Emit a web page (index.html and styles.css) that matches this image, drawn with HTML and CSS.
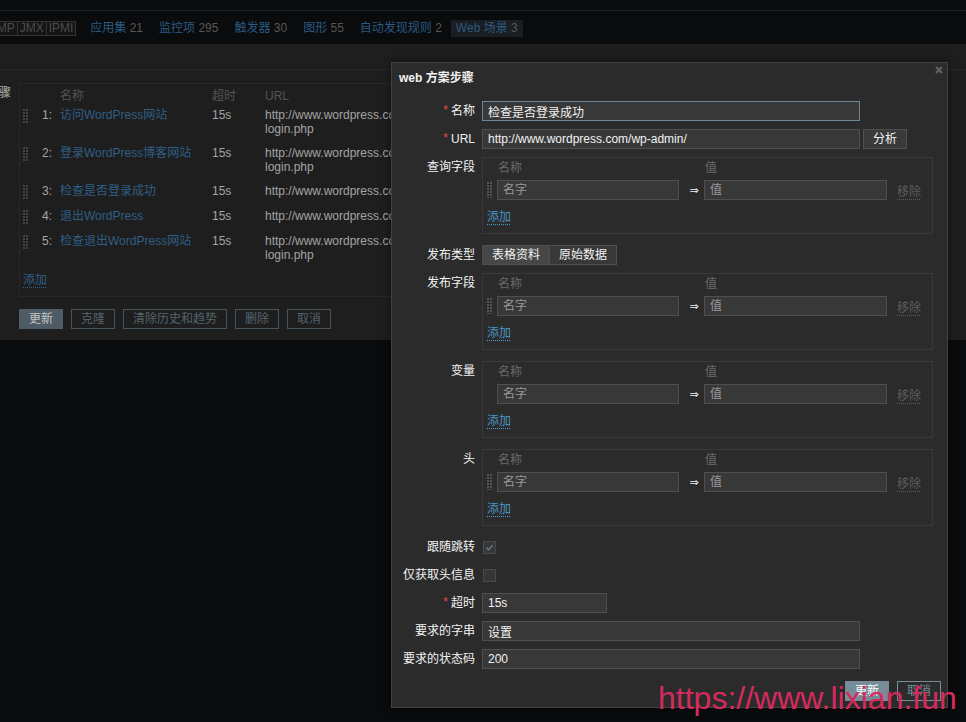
FILE: index.html
```html
<!DOCTYPE html>
<html lang="zh-CN">
<head>
    <meta charset="UTF-8">
    <meta name="viewport" content="width=device-width, initial-scale=1.0">
    <title>Web 场景</title>
    <link rel="stylesheet" href="styles.css">
</head>
<body>
    <div class="top-strip"></div>

    <nav class="host-nav">
        <span class="avail"><span class="avail-item snmp">SNMP</span><span class="avail-item">JMX</span><span class="avail-item">IPMI</span></span>
        <span class="nav-item"><a href="#">应用集</a> 21</span>
        <span class="nav-item"><a href="#">监控项</a> 295</span>
        <span class="nav-item"><a href="#">触发器</a> 30</span>
        <span class="nav-item"><a href="#">图形</a> 55</span>
        <span class="nav-item"><a href="#">自动发现规则</a> 2</span>
        <span class="nav-item active"><a href="#">Web 场景</a> 3</span>
    </nav>

    <div class="page">
        <div class="page-tabs"></div>
        <div class="page-row">
            <div class="page-label">步骤</div>
            <div class="page-field">
                <div class="steps">
                    <div class="step step-head">
                        <span></span><span></span><span>名称</span><span>超时</span><span>URL</span>
                    </div>
                    <div class="step">
                        <span class="grip"></span><span class="num">1:</span><a href="#">访问WordPress网站</a><span>15s</span><span class="url">http://www.wordpress.com/wp-<br>login.php</span>
                    </div>
                    <div class="step">
                        <span class="grip"></span><span class="num">2:</span><a href="#">登录WordPress博客网站</a><span>15s</span><span class="url">http://www.wordpress.com/wp-<br>login.php</span>
                    </div>
                    <div class="step single">
                        <span class="grip"></span><span class="num">3:</span><a href="#">检查是否登录成功</a><span>15s</span><span class="url">http://www.wordpress.com/wp-admin/</span>
                    </div>
                    <div class="step single">
                        <span class="grip"></span><span class="num">4:</span><a href="#">退出WordPress</a><span>15s</span><span class="url">http://www.wordpress.com/wp-login.php?action=logout</span>
                    </div>
                    <div class="step">
                        <span class="grip"></span><span class="num">5:</span><a href="#">检查退出WordPress网站</a><span>15s</span><span class="url">http://www.wordpress.com/wp-<br>login.php</span>
                    </div>
                    <a class="add-link" href="#">添加</a>
                </div>

                <div class="page-buttons">
                    <button class="btn primary">更新</button>
                    <button class="btn">克隆</button>
                    <button class="btn">清除历史和趋势</button>
                    <button class="btn">删除</button>
                    <button class="btn">取消</button>
                </div>
            </div>
        </div>
    </div>

    <div class="dialog">
        <h4 class="dialog-title">web 方案步骤</h4>
        <button class="dialog-close" title="关闭">
            <svg width="8" height="8" viewBox="0 0 8 8"><path d="M1 1L7 7M7 1L1 7" stroke="#646464" stroke-width="2"/></svg>
        </button>

        <div class="dlg-form">
            <div class="frow">
                <label class="flabel req">名称</label>
                <input class="txt wide focus" type="text" value="检查是否登录成功">
            </div>
            <div class="frow">
                <label class="flabel req">URL</label>
                <input class="txt wide" type="text" value="http://www.wordpress.com/wp-admin/">
                <button class="btn-grey">分析</button>
            </div>
            <div class="frow box-row">
                <label class="flabel">查询字段</label>
                <div class="pairs">
                    <div class="pair-head"><span></span><span>名称</span><span></span><span>值</span></div>
                    <div class="pair-row">
                        <span class="grip"></span>
                        <input class="txt" type="text" placeholder="名字">
                        <span class="arrow">⇒</span>
                        <input class="txt" type="text" placeholder="值">
                        <a class="remove" href="#">移除</a>
                    </div>
                    <a class="add-link" href="#">添加</a>
                </div>
            </div>
            <div class="frow">
                <label class="flabel">发布类型</label>
                <div class="seg">
                    <span class="seg-item on">表格资料</span><span class="seg-item">原始数据</span>
                </div>
            </div>
            <div class="frow box-row">
                <label class="flabel">发布字段</label>
                <div class="pairs">
                    <div class="pair-head"><span></span><span>名称</span><span></span><span>值</span></div>
                    <div class="pair-row">
                        <span class="grip"></span>
                        <input class="txt" type="text" placeholder="名字">
                        <span class="arrow">⇒</span>
                        <input class="txt" type="text" placeholder="值">
                        <a class="remove" href="#">移除</a>
                    </div>
                    <a class="add-link" href="#">添加</a>
                </div>
            </div>
            <div class="frow box-row">
                <label class="flabel">变量</label>
                <div class="pairs">
                    <div class="pair-head"><span></span><span>名称</span><span></span><span>值</span></div>
                    <div class="pair-row">
                        <span></span>
                        <input class="txt" type="text" placeholder="名字">
                        <span class="arrow">⇒</span>
                        <input class="txt" type="text" placeholder="值">
                        <a class="remove" href="#">移除</a>
                    </div>
                    <a class="add-link" href="#">添加</a>
                </div>
            </div>
            <div class="frow box-row">
                <label class="flabel">头</label>
                <div class="pairs">
                    <div class="pair-head"><span></span><span>名称</span><span></span><span>值</span></div>
                    <div class="pair-row">
                        <span class="grip"></span>
                        <input class="txt" type="text" placeholder="名字">
                        <span class="arrow">⇒</span>
                        <input class="txt" type="text" placeholder="值">
                        <a class="remove" href="#">移除</a>
                    </div>
                    <a class="add-link" href="#">添加</a>
                </div>
            </div>
            <div class="frow">
                <label class="flabel">跟随跳转</label>
                <span class="cbox">
                    <svg width="11" height="11" viewBox="0 0 11 11"><path d="M2.3 5.6l2.2 2.2 4.2-4.6" stroke="#5c7282" stroke-width="1.8" fill="none"/></svg>
                </span>
            </div>
            <div class="frow">
                <label class="flabel">仅获取头信息</label>
                <span class="cbox"></span>
            </div>
            <div class="frow">
                <label class="flabel req">超时</label>
                <input class="txt short" type="text" value="15s">
            </div>
            <div class="frow">
                <label class="flabel">要求的字串</label>
                <input class="txt wide" type="text" value="设置">
            </div>
            <div class="frow">
                <label class="flabel">要求的状态码</label>
                <input class="txt wide" type="text" value="200">
            </div>
        </div>

        <div class="dlg-footer">
            <button class="btn-d primary">更新</button>
            <button class="btn-d">取消</button>
        </div>
    </div>

    <div class="watermark">https://www.lixian.fun</div>
</body>
</html>
```

FILE: styles.css
```css
* {
    margin: 0;
    padding: 0;
    box-sizing: border-box;
}

body {
    width: 966px;
    height: 722px;
    overflow: hidden;
    position: relative;
    background-color: #0a0b0d;
    font-family: "Liberation Sans", "Noto Sans CJK SC", sans-serif;
    font-size: 12px;
    color: #a4a4a4;
}

a {
    text-decoration: none;
}

/* top host navigation (dimmed behind the overlay) */

.top-strip {
    height: 11px;
    border-bottom: 1px solid #1e2022;
}

.host-nav {
    height: 33px;
    padding-top: 2px;
    display: flex;
    align-items: center;
    gap: 16px;
}

.avail {
    display: flex;
    margin-left: -23px;
    margin-right: -2px;
}

.avail-item {
    padding: 0 2px;
    line-height: 13px;
    color: #4c4c4c;
    border: 1px solid #333;
    background: #141516;
}

.avail-item + .avail-item {
    border-left: none;
}

.nav-item {
    color: #575757;
    line-height: 17px;
}

.nav-item a {
    color: #2b5a82;
}

.nav-item.active {
    margin-left: -7px;
    padding: 0 5px;
    background: #1b1e21;
}

/* page behind the dialog */

.page {
    height: 296px;
    background: #1e1e1e;
}

.page-tabs {
    height: 26px;
    border-bottom: 1px solid #292929;
}

.page-row {
    display: flex;
    gap: 8px;
    padding-top: 13px;
}

.page-label {
    width: 24px;
    margin-left: -13px;
    line-height: 20px;
    text-align: right;
    color: #b0b0b0;
}

.steps {
    width: 900px;
    border: 1px solid #282828;
    padding: 5px 0 9px 3px;
}

.step {
    display: grid;
    grid-template-columns: 10px 27px 152px 53px 600px;
    line-height: 14px;
    padding: 5px 0;
}

.step.single {
    padding: 4.5px 0;
}

.step.step-head {
    padding: 0;
    color: #545454;
}

.step a {
    color: #2f5e86;
    white-space: nowrap;
}

.step .num {
    text-align: right;
    padding-right: 8px;
}

.step .url {
    white-space: nowrap;
}

.grip {
    width: 5px;
    height: 15px;
    margin-top: 1px;
    background-image: radial-gradient(circle at 1px 1px, #444 0.9px, transparent 1.1px);
    background-size: 3px 3px;
}

.steps .add-link {
    display: inline-block;
    margin-top: 6px;
    line-height: 14px;
    color: #2f5e86;
    text-decoration: underline dotted;
    text-underline-offset: 3px;
}

.page-buttons {
    display: flex;
    gap: 8px;
    margin-top: 12px;
}

.btn {
    height: 20px;
    padding: 0 9px;
    font: inherit;
    line-height: 18px;
    color: #55636d;
    background: transparent;
    border: 1px solid #46545e;
}

.btn.primary {
    background: #4d5c67;
    border-color: #4d5c67;
    color: #c4c4c4;
}

/* dialog */

.dialog {
    position: absolute;
    left: 391px;
    top: 62px;
    width: 557px;
    height: 646px;
    padding: 7px 8px 0 8px;
    background: #2b2b2b;
    border: 1px solid #424242;
    box-shadow: 0 0 8px rgba(0, 0, 0, 0.5);
    color: #f2f2f2;
}

.dialog-title {
    margin-left: -1px;
    font-size: 12px;
    line-height: 16px;
    font-weight: bold;
}

.dialog-close {
    position: absolute;
    top: 3px;
    right: 4px;
    width: 8px;
    height: 8px;
    border: none;
    background: none;
    display: flex;
}

.dlg-form {
    display: flex;
    flex-direction: column;
    gap: 8px;
    margin-top: 15px;
}

.frow {
    display: flex;
    align-items: flex-start;
    gap: 7px;
}

.frow.box-row {
    margin-bottom: 3px;
}

.flabel {
    width: 75px;
    height: 20px;
    flex-shrink: 0;
    line-height: 20px;
    text-align: right;
    white-space: nowrap;
}

.flabel.req::before {
    content: "*";
    position: relative;
    top: -1px;
    margin-right: 3px;
    color: #e04c4c;
}

.txt {
    height: 20px;
    padding: 0 5px;
    font: inherit;
    line-height: 18px;
    color: #f2f2f2;
    background: #383838;
    border: 1px solid #4f4f4f;
    outline: none;
}

.txt::placeholder {
    color: #9a9a9a;
}

.txt.wide {
    width: 378px;
}

.txt.short {
    width: 125px;
}

.txt.focus {
    border-color: #6f8593;
}

.btn-grey {
    height: 20px;
    width: 44px;
    margin-left: -4px;
    font: inherit;
    line-height: 18px;
    color: #f2f2f2;
    background: #3a3a3a;
    border: 1px solid #4f4f4f;
}

.pairs {
    width: 451px;
    height: 77px;
    padding: 2px 0 0 4px;
    border: 1px solid #393939;
}

.pair-head,
.pair-row {
    display: grid;
    grid-template-columns: 10px 182px 25px 183px auto;
}

.pair-head {
    line-height: 16px;
    color: #6a6a6a;
}

.pair-head span {
    padding-left: 1px;
}

.pair-row {
    margin-top: 4px;
    height: 20px;
    align-items: center;
}

.pair-row .txt {
    width: 100%;
}

.pair-row .grip {
    height: 16px;
    margin-top: 0;
    background-image: radial-gradient(circle at 1px 1px, #545454 0.9px, transparent 1.1px);
}

.arrow {
    padding-left: 5px;
    text-align: center;
    font-family: "DejaVu Sans", sans-serif;
    font-size: 11px;
    color: #f2f2f2;
}

.remove {
    margin-left: 10px;
    color: #5c5c5c;
    text-decoration: underline dotted;
    text-underline-offset: 3px;
}

.pairs .add-link {
    display: inline-block;
    margin-top: 9px;
    line-height: 16px;
    color: #4796c4;
    text-decoration: underline dotted;
    text-underline-offset: 3px;
}

.seg {
    display: flex;
    height: 20px;
    border: 1px solid #4f4f4f;
}

.seg-item {
    padding: 0 9px;
    line-height: 18px;
    background: #383838;
}

.seg-item.on {
    background: #474747;
    border-right: 1px solid #4f4f4f;
}

.cbox {
    width: 13px;
    height: 13px;
    margin: 4px 0 0 1px;
    display: flex;
    align-items: center;
    justify-content: center;
    background: #363636;
    border: 1px solid #4a4a4a;
}

.dlg-footer {
    display: flex;
    justify-content: flex-end;
    gap: 8px;
    margin: 12px -2px 0 0;
}

.btn-d {
    height: 20px;
    width: 44px;
    font: inherit;
    line-height: 18px;
    color: #768d99;
    background: transparent;
    border: 1px solid #768d99;
}

.btn-d.primary {
    background: #768d99;
    color: #ffffff;
}

.watermark {
    position: absolute;
    left: 658px;
    top: 682px;
    font-size: 32px;
    line-height: 32px;
    color: #d62a5d;
    white-space: nowrap;
}
```
